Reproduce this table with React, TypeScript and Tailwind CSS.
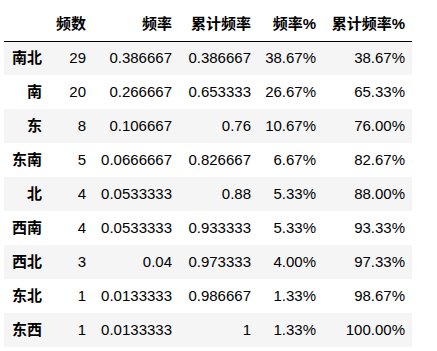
const rows: [string, string, string, string, string, string][] = [
  ['南北', '29', '0.386667', '0.386667', '38.67%', '38.67%'],
  ['南', '20', '0.266667', '0.653333', '26.67%', '65.33%'],
  ['东', '8', '0.106667', '0.76', '10.67%', '76.00%'],
  ['东南', '5', '0.0666667', '0.826667', '6.67%', '82.67%'],
  ['北', '4', '0.0533333', '0.88', '5.33%', '88.00%'],
  ['西南', '4', '0.0533333', '0.933333', '5.33%', '93.33%'],
  ['西北', '3', '0.04', '0.973333', '4.00%', '97.33%'],
  ['东北', '1', '0.0133333', '0.986667', '1.33%', '98.67%'],
  ['东西', '1', '0.0133333', '1', '1.33%', '100.00%'],
]

const headers = ['频数', '频率', '累计频率', '频率%', '累计频率%']
const widths = ['w-[45px]', 'w-[44px]', 'w-[86px]', 'w-[79px]', 'w-[65px]', 'w-[89px]']

export default function App() {
  return (
    <div className="pl-[4px] pt-[8px] bg-white min-h-screen text-[15px] text-black font-['Liberation_Sans','Noto_Sans_CJK_SC',sans-serif]">
      <table className="border-collapse table-fixed w-[408px]">
        <thead>
          <tr className="h-[33px] border-b border-black">
            <th className={`${widths[0]} pr-[7px]`}></th>
            {headers.map((h, i) => (
              <th key={h} className={`${widths[i + 1]} pr-[7px] text-right font-bold`}>
                {h}
              </th>
            ))}
          </tr>
        </thead>
        <tbody>
          {rows.map((r, ri) => (
            <tr key={r[0]} className={`h-[34px] ${ri % 2 === 0 ? 'bg-[#f5f5f5]' : 'bg-white'}`}>
              <th className="pr-[7px] text-right font-bold">{r[0]}</th>
              {r.slice(1).map((c, ci) => (
                <td key={ci} className="pr-[7px] text-right font-normal">
                  {c}
                </td>
              ))}
            </tr>
          ))}
        </tbody>
      </table>
    </div>
  )
}
